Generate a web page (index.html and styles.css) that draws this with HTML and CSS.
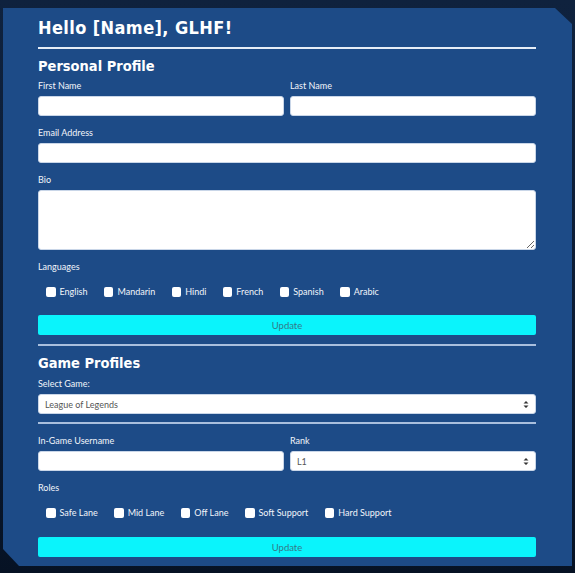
FILE: index.html
```html
<!DOCTYPE html>
<html lang="en">
<head>
<meta charset="utf-8">
<title>Profile</title>
<link rel="stylesheet" href="styles.css">
</head>
<body>
<main class="panel">
  <h1 class="title">Hello [Name], GLHF!</h1>
  <hr class="rule rule-top">
  <h2 class="section">Personal Profile</h2>
  <form class="form">
    <div class="row2">
      <div class="field">
        <label class="lbl">First Name</label>
        <input class="ctl" type="text">
      </div>
      <div class="field">
        <label class="lbl">Last Name</label>
        <input class="ctl" type="text">
      </div>
    </div>
    <div class="field">
      <label class="lbl">Email Address</label>
      <input class="ctl" type="text">
    </div>
    <div class="field">
      <label class="lbl">Bio</label>
      <textarea class="ctl area"></textarea>
    </div>
    <div class="field">
      <label class="lbl">Languages</label>
      <div class="checks">
        <label class="chk"><input type="checkbox"><span>English</span></label>
        <label class="chk"><input type="checkbox"><span>Mandarin</span></label>
        <label class="chk"><input type="checkbox"><span>Hindi</span></label>
        <label class="chk"><input type="checkbox"><span>French</span></label>
        <label class="chk"><input type="checkbox"><span>Spanish</span></label>
        <label class="chk"><input type="checkbox"><span>Arabic</span></label>
      </div>
    </div>
    <button class="btn" type="button">Update</button>
  </form>
  <hr class="rule rule-mid">
  <h2 class="section">Game Profiles</h2>
  <form class="form form-game">
    <div class="field">
      <label class="lbl">Select Game:</label>
      <div class="sel-wrap">
        <select class="ctl sel"><option>League of Legends</option></select>
        <svg class="caret" width="6" height="9" viewBox="0 0 6 9"><path d="M0.5 3.5 L3 1 L5.5 3.5 Z M0.5 5.5 L3 8 L5.5 5.5 Z" fill="#333"/></svg>
      </div>
    </div>
  </form>
  <hr class="rule rule-sub">
  <form class="form">
    <div class="row2">
      <div class="field">
        <label class="lbl">In-Game Username</label>
        <input class="ctl" type="text">
      </div>
      <div class="field">
        <label class="lbl">Rank</label>
        <div class="sel-wrap">
          <select class="ctl sel"><option>L1</option></select>
          <svg class="caret" width="6" height="9" viewBox="0 0 6 9"><path d="M0.5 3.5 L3 1 L5.5 3.5 Z M0.5 5.5 L3 8 L5.5 5.5 Z" fill="#333"/></svg>
        </div>
      </div>
    </div>
    <div class="field">
      <label class="lbl">Roles</label>
      <div class="checks">
        <label class="chk"><input type="checkbox"><span>Safe Lane</span></label>
        <label class="chk"><input type="checkbox"><span>Mid Lane</span></label>
        <label class="chk"><input type="checkbox"><span>Off Lane</span></label>
        <label class="chk"><input type="checkbox"><span>Soft Support</span></label>
        <label class="chk"><input type="checkbox"><span>Hard Support</span></label>
      </div>
    </div>
    <button class="btn btn-last" type="button">Update</button>
  </form>
</main>
</body>
</html>
```
FILE: styles.css
```css
* { box-sizing: border-box; }
html, body { height: 100%; }
body {
  margin: 0;
  background: linear-gradient(180deg, #0f223e 0%, #0b1b33 60%, #061224 100%);
  font-family: "Lato", "Open Sans", sans-serif;
  color: #fff;
  overflow: hidden;
}
.panel {
  margin: 8px 3px 0 3px;
  width: 569px;
  height: 558px;
  background: #1d4b87;
  padding: 8px 36px 9px 35px;
  clip-path: polygon(0 0, 552px 0, 569px 16px, 569px 100%, 16px 100%, 0 541px);
}
.title {
  margin: 0;
  font-family: "DejaVu Sans Condensed", "DejaVu Sans", sans-serif;
  font-weight: bold;
  font-size: 18px;
  line-height: 24px;
  letter-spacing: 0.4px;
}
.section {
  margin: 7px 0 0 0;
  font-family: "DejaVu Sans Condensed", "DejaVu Sans", sans-serif;
  font-weight: bold;
  font-size: 14.5px;
  line-height: 20px;
}
.rule { border: 0; margin: 0; height: 2px; }
.rule-top { background: #e6edf7; margin-top: 7px; }
.rule-mid { background: #a9bfdd; margin-top: 9px; }
.rule-sub { background: #a9bfdd; margin-top: 8px; }
.form {
  display: flex;
  flex-direction: column;
  gap: 10px;
  margin-top: 3px;
}
.form-game { margin-top: 4px; }
.rule-sub + .form { margin-top: 10px; }
.row2 {
  display: grid;
  grid-template-columns: 1fr 1fr;
  gap: 6px;
}
.field { display: flex; flex-direction: column; }
.lbl {
  font-size: 9px;
  line-height: 14px;
  margin-bottom: 3px;
  color: #f2f5fa;
}
.ctl {
  display: block;
  width: 100%;
  height: 20px;
  border: 1px solid #c9d6e8;
  border-radius: 3px;
  background: #fff;
  font-family: "Lato", "Open Sans", sans-serif;
  font-size: 9px;
  color: #555;
  padding: 0 6px;
  outline: none;
}
.area { height: 60px; resize: vertical; }
.sel-wrap { position: relative; }
.sel { appearance: none; -webkit-appearance: none; }
.caret { position: absolute; right: 7px; top: 6px; }
.checks {
  display: flex;
  gap: 16.5px;
  padding-left: 8px;
  margin-top: 8px;
}
.chk {
  display: flex;
  align-items: center;
  gap: 4px;
  font-size: 9px;
  line-height: 14px;
  color: #f2f5fa;
}
.chk input {
  appearance: none;
  -webkit-appearance: none;
  margin: 0;
  width: 9.5px;
  height: 9.5px;
  background: #fff;
  border-radius: 2px;
  border: 0;
}
.btn {
  margin-top: 6px;
  height: 20px;
  border: 0;
  border-radius: 2px;
  background: #0af4fc;
  color: #337a88;
  font-family: "Lato", "Open Sans", sans-serif;
  font-size: 9.5px;
  cursor: pointer;
}
.btn-last { margin-top: 7px; }
```
